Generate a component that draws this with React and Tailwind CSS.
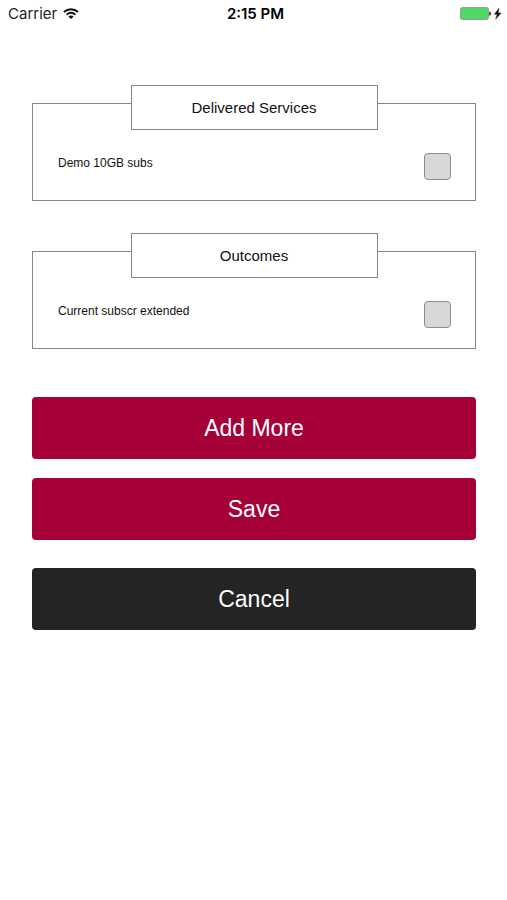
import React from "react";

const WifiIcon = () => (
  <svg width="16" height="12" viewBox="0 0 16 12" fill="none" stroke="#111" aria-hidden="true">
    <path d="M1 4C5 .3 11 .3 15 4" strokeWidth="1.9" />
    <path d="M3.5 6.7C6.2 4.3 9.8 4.3 12.5 6.7" strokeWidth="1.8" />
    <path d="M8 11 5.4 8.4C7 7.1 9 7.1 10.6 8.4Z" fill="#111" stroke="none" />
  </svg>
);

const BatteryIcon = () => (
  <svg width="43" height="14" viewBox="0 0 43 14" aria-hidden="true">
    <rect x="0.5" y="0.5" width="28" height="12" rx="2" fill="#4cd964" stroke="#9a9a9a" />
    <path d="M29.5 4.8C31.2 5 31.2 8.2 29.5 8.4Z" fill="#333" stroke="#333" strokeWidth="0.6" />
    <path d="M39 1.2 34.4 7.3H37.2L35.6 12.2 41.2 5.9H38.1Z" fill="#111" stroke="#111" strokeWidth="0.4" />
  </svg>
);

const StatusBar = () => (
  <header className="grid grid-cols-3 items-center h-7 pl-2 pr-1 font-['Inter',sans-serif] text-[15px] text-[#222]">
    <div className="flex items-center gap-1.5">
      <span>Carrier</span>
      <WifiIcon />
    </div>
    <div className="text-center font-semibold text-black">2:15 PM</div>
    <div className="flex justify-end">
      <BatteryIcon />
    </div>
  </header>
);

const CheckGroup = ({ title, id, label }) => (
  <section className="border border-[#858585]">
    <h2 className="w-[247px] h-[45px] -mt-[19px] mx-auto pt-0.5 flex items-center justify-center border border-[#858585] bg-white text-[15px]">
      {title}
    </h2>
    <div className="flex items-start justify-between pt-[23px] pb-5 pl-[25px] pr-6">
      <label htmlFor={id} className="text-xs leading-5">
        {label}
      </label>
      <input
        id={id}
        type="checkbox"
        className="appearance-none size-[27px] rounded border border-[#8c8c8c] bg-[#d8d8d8] checked:bg-[#a50037]"
      />
    </div>
  </section>
);

const Button = ({ children, className }) => (
  <button type="button" className={`w-full h-[62px] rounded text-[23px] text-white ${className}`}>
    {children}
  </button>
);

const App = () => {
  return (
    <div className="min-h-screen bg-white font-['Liberation_Sans',Arial,sans-serif] text-[#111]">
      <StatusBar />
      <main className="pt-[75px] pl-8 pr-[31px]">
        <div className="flex flex-col gap-[50px]">
          <CheckGroup title="Delivered Services" id="delivered" label="Demo 10GB subs" />
          <CheckGroup title="Outcomes" id="outcomes" label="Current subscr extended" />
        </div>
        <div className="flex flex-col mt-12">
          <Button className="bg-[#a50037]">Add More</Button>
          <Button className="mt-[19px] bg-[#a50037]">Save</Button>
          <Button className="mt-7 bg-[#242424]">Cancel</Button>
        </div>
      </main>
    </div>
  );
};

export default App;
